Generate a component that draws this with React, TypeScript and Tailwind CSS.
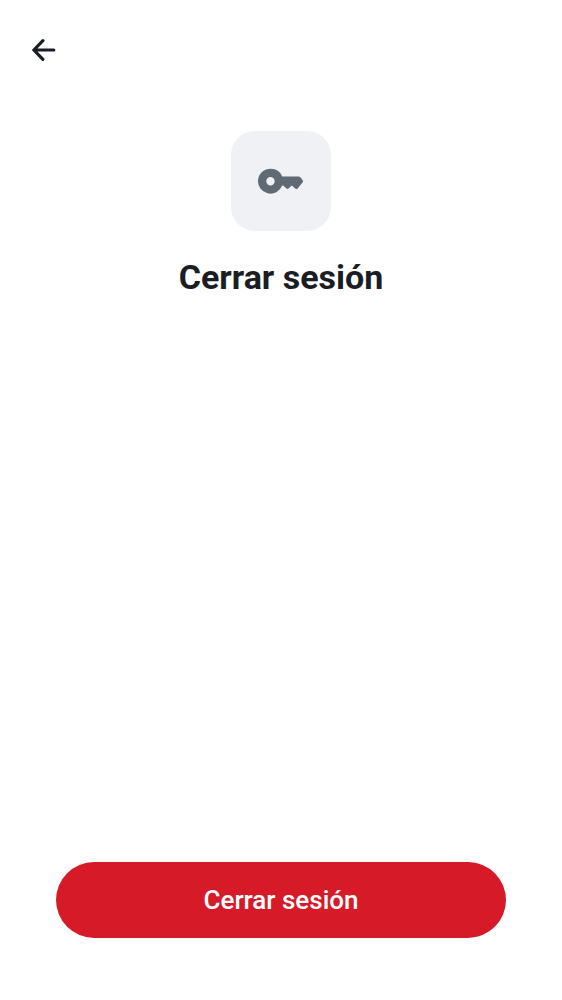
export default function App() {
  return (
    <div className="flex min-h-screen flex-col bg-white font-['Roboto',sans-serif] text-[#1b1d25]">
      <header className="flex p-6 pb-0">
        <button type="button" aria-label="Volver" className="flex h-13 w-10 items-center justify-center">
          <svg viewBox="0 0 24 24" className="h-6 w-6" fill="none" stroke="currentColor" strokeWidth="3.2" strokeLinecap="round" strokeLinejoin="miter" aria-hidden="true">
            <path d="M21.8 12H2.2M10.9 2.7 1.9 12l9 9.3" />
          </svg>
        </button>
      </header>
      <main className="flex grow flex-col items-center px-14 pt-[55px]">
        <div className="flex size-[100px] items-center justify-center rounded-3xl bg-[#f0f1f5]">
          <svg viewBox="0 0 46 26" className="h-[26px] w-[46px]" fill="#606a75" fillRule="evenodd" aria-hidden="true">
            <path d="M12.5.7a12.5 12.5 0 1 0 11.7 16.9h.9l3.4 2.9q1 .8 2 0l3.2-2.9 3.8 3.1q1 .8 2 0l5.2-6.4q.8-1 0-2L42.4 9.2q-.7-.7-1.7-.7H24.3A12.5 12.5 0 0 0 12.5.7Zm0 8.3a4.2 4.2 0 1 1 0 8.4 4.2 4.2 0 0 1 0-8.4Z" />
          </svg>
        </div>
        <h1 className="mt-6 text-center text-[34px] leading-[44px] font-bold">Cerrar sesión</h1>
      </main>
      <footer className="px-14 pb-[62px]">
        <button type="button" className="h-[76px] w-full rounded-full bg-[#d61a28] text-[26px] font-medium text-white">
          Cerrar sesión
        </button>
      </footer>
    </div>
  );
}
